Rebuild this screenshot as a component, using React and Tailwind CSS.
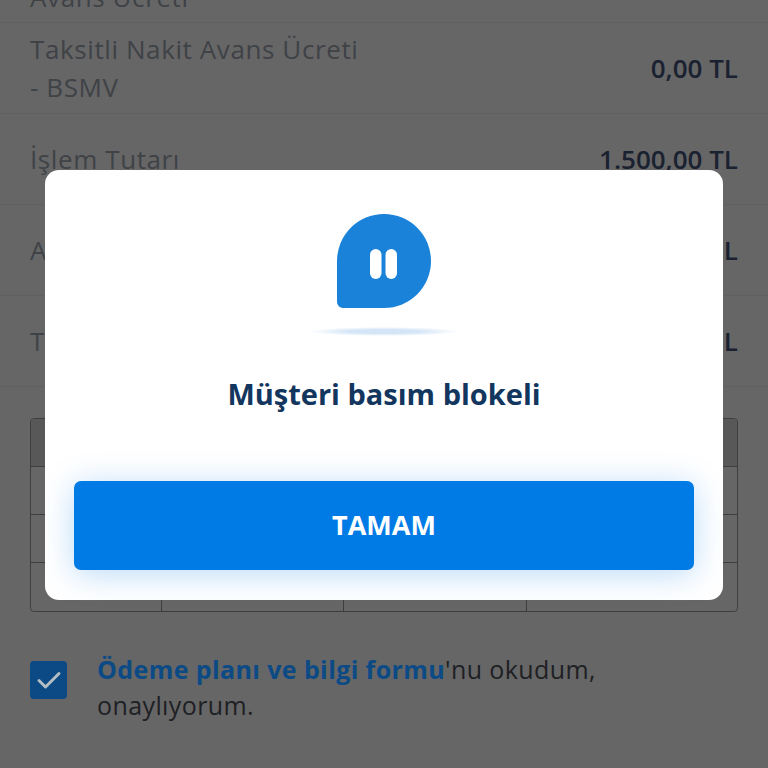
function Row({ label, value }) {
  return (
    <div className="flex h-[91px] items-center justify-between border-b border-[#606060] px-[30px]">
      <div className="w-[350px] text-[26px] leading-[38px] tracking-[0.6px] text-[#3f4246]">{label}</div>
      <div className="text-[26px] font-semibold text-[#1a2130]">{value}</div>
    </div>
  );
}

function TableRow({ header }) {
  return (
    <div className={`grid h-[48px] grid-cols-[131px_182px_183px_1fr] border-b border-[#3e3e3e] last:border-b-0 ${header ? 'bg-[#585858]' : ''}`}>
      <div className="border-r border-[#3e3e3e]" />
      <div className="border-r border-[#3e3e3e]" />
      <div className="border-r border-[#3e3e3e]" />
      <div />
    </div>
  );
}

function PauseBubble() {
  return (
    <svg width="150" height="122" viewBox="0 0 150 122" fill="none">
      <defs>
        <radialGradient id="floor">
          <stop offset="0.45" stopColor="#d3e5f6" />
          <stop offset="1" stopColor="#d3e5f6" stopOpacity="0" />
        </radialGradient>
      </defs>
      <path d="M28 47a47 47 0 1 1 47 47H34a6 6 0 0 1-6-6Z" fill="#1a82d8" />
      <rect x="61" y="35" width="11.5" height="30" rx="5.75" fill="#fff" />
      <rect x="76.5" y="35" width="11.5" height="30" rx="5.75" fill="#fff" />
      <ellipse cx="75" cy="117.5" rx="75" ry="4.5" fill="url(#floor)" />
    </svg>
  );
}

export default function App() {
  return (
    <div className="relative h-[768px] w-[768px] overflow-hidden bg-[#666666] font-['Open_Sans',sans-serif]">
      <div className="flex h-[23px] items-end overflow-hidden border-b border-[#606060] px-[30px] pb-[6px]">
        <div className="shrink-0 text-[26px] leading-[38px] tracking-[0.6px] text-[#3f4246]">Avans Ücreti</div>
      </div>
      <Row label={<>Taksitli Nakit Avans Ücreti<br />- BSMV</>} value="0,00 TL" />
      <Row label="İşlem Tutarı" value="1.500,00 TL" />
      <Row label="A" value="L" />
      <Row label="T" value="L" />

      <div className="mx-[30px] mt-[31px] overflow-hidden rounded-[4px] border border-[#3e3e3e]">
        <TableRow header />
        <TableRow />
        <TableRow />
        <TableRow />
      </div>

      <div className="mt-[39px] flex gap-[30px] px-[30px]">
        <div className="mt-[10px] flex h-[38px] w-[37px] shrink-0 items-center justify-center rounded-[4px] bg-[#0b4a85]">
          <svg width="26" height="20" viewBox="0 0 26 20" fill="none">
            <path d="M3 10.5l6.5 6.5L23 3.5" stroke="#b4bcc4" strokeWidth="3" strokeLinecap="round" strokeLinejoin="round" />
          </svg>
        </div>
        <p className="text-[25px] leading-[36px] tracking-[0.4px] text-[#1e2024]">
          <span className="font-bold text-[#0b4a85]">Ödeme planı ve bilgi formu</span>'nu okudum,
          <br />
          onaylıyorum.
        </p>
      </div>

      {/* modal */}
      <div className="absolute left-[45px] top-[170px] flex h-[430px] w-[678px] flex-col items-center rounded-[14px] bg-white">
        <div className="mt-[44px]">
          <PauseBubble />
        </div>
        <div className="mt-[38px] text-[29px] font-bold leading-[40px] text-[#12365e]">Müşteri basım blokeli</div>
        <button className="mt-[67px] h-[89px] w-[620px] rounded-[7px] bg-[#007be5] text-[27px] font-bold text-white shadow-[0_4px_32px_rgba(0,123,229,0.28)]">
          TAMAM
        </button>
      </div>
    </div>
  );
}
